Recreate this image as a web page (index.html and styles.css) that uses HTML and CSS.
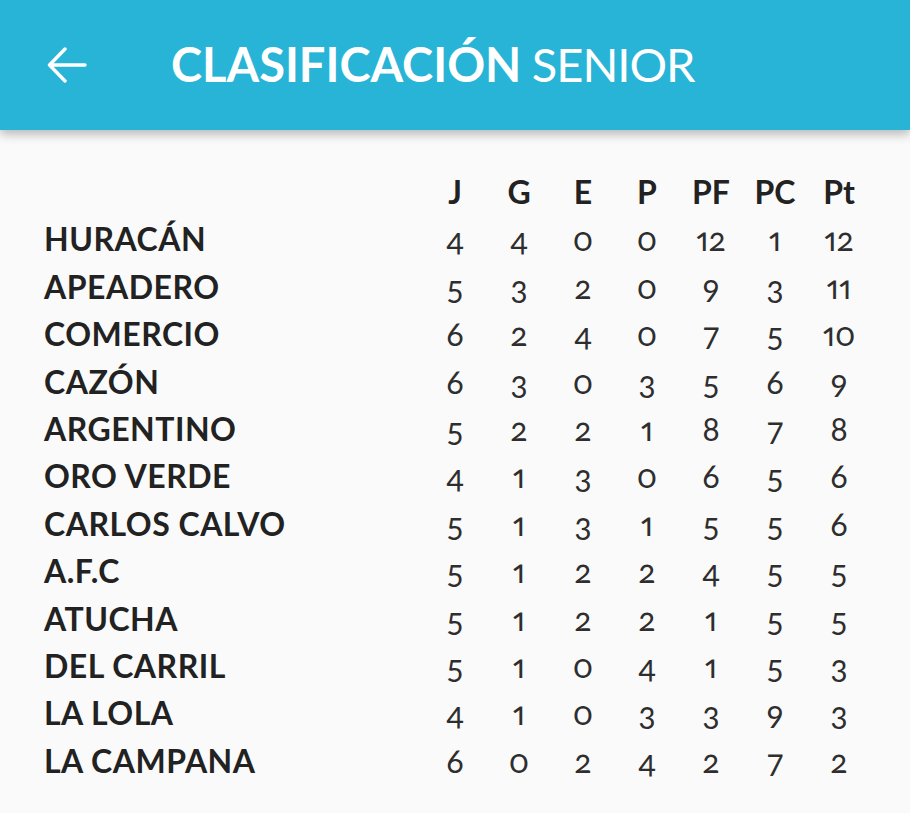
FILE: index.html
```html
<!DOCTYPE html>
<html lang="es">
<head>
<meta charset="utf-8">
<title>Clasificación Senior</title>
<link rel="stylesheet" href="styles.css">
</head>
<body>
<header class="appbar">
  <svg class="back" width="40" height="36" viewBox="0 0 40 36" aria-hidden="true">
    <path d="M38 18H3M18 2L2.5 18L18 34" fill="none" stroke="#fff" stroke-width="3.4" stroke-linecap="round" stroke-linejoin="round"/>
  </svg>
  <h1 class="title"><span class="strong">CLASIFICACIÓN</span> <span class="light">SENIOR</span></h1>
</header>
<main class="table">
  <div class="row head"><span class="name"></span><span>J</span><span>G</span><span>E</span><span>P</span><span>PF</span><span>PC</span><span>Pt</span></div>
  <div class="row"><span class="name">HURACÁN</span><span>4</span><span>4</span><span>0</span><span>0</span><span>12</span><span>1</span><span>12</span></div>
  <div class="row"><span class="name">APEADERO</span><span>5</span><span>3</span><span>2</span><span>0</span><span>9</span><span>3</span><span>11</span></div>
  <div class="row"><span class="name">COMERCIO</span><span>6</span><span>2</span><span>4</span><span>0</span><span>7</span><span>5</span><span>10</span></div>
  <div class="row"><span class="name">CAZÓN</span><span>6</span><span>3</span><span>0</span><span>3</span><span>5</span><span>6</span><span>9</span></div>
  <div class="row"><span class="name">ARGENTINO</span><span>5</span><span>2</span><span>2</span><span>1</span><span>8</span><span>7</span><span>8</span></div>
  <div class="row"><span class="name">ORO VERDE</span><span>4</span><span>1</span><span>3</span><span>0</span><span>6</span><span>5</span><span>6</span></div>
  <div class="row"><span class="name">CARLOS CALVO</span><span>5</span><span>1</span><span>3</span><span>1</span><span>5</span><span>5</span><span>6</span></div>
  <div class="row"><span class="name">A.F.C</span><span>5</span><span>1</span><span>2</span><span>2</span><span>4</span><span>5</span><span>5</span></div>
  <div class="row"><span class="name">ATUCHA</span><span>5</span><span>1</span><span>2</span><span>2</span><span>1</span><span>5</span><span>5</span></div>
  <div class="row"><span class="name">DEL CARRIL</span><span>5</span><span>1</span><span>0</span><span>4</span><span>1</span><span>5</span><span>3</span></div>
  <div class="row"><span class="name">LA LOLA</span><span>4</span><span>1</span><span>0</span><span>3</span><span>3</span><span>9</span><span>3</span></div>
  <div class="row"><span class="name">LA CAMPANA</span><span>6</span><span>0</span><span>2</span><span>4</span><span>2</span><span>7</span><span>2</span></div>
</main>
</body>
</html>
```
FILE: styles.css
```css
html, body {
  margin: 0;
  padding: 0;
  background: #fafafa;
}
body {
  font-family: Lato, "Noto Sans", sans-serif;
  color: #222222;
  width: 910px;
  height: 813px;
  overflow: hidden;
}
.appbar {
  height: 130px;
  background: #27b4d6;
  display: flex;
  align-items: center;
  padding-left: 47px;
  box-shadow: 0 4px 10px rgba(0, 0, 0, 0.28);
  position: relative;
  z-index: 1;
}
.back {
  flex: none;
}
.title {
  margin: -2px 0 0 84px;
  color: #ffffff;
  font-size: 47px;
  line-height: 1;
  white-space: nowrap;
  word-spacing: -1px;
}
.title .strong {
  font-weight: 700;
  letter-spacing: 0;
}
.title .light {
  font-weight: 400;
  letter-spacing: -1px;
}
.table {
  padding: 168px 0 0 44px;
  margin-top: -130px;
}
.row {
  display: grid;
  grid-template-columns: 379px repeat(7, 64px);
  height: 47.4px;
  align-items: center;
  font-size: 32px;
  line-height: 47.4px;
}
.row span {
  text-align: center;
  font-variant-numeric: oldstyle-nums proportional-nums;
  font-weight: 400;
  color: #2e2e2e;
}
.row .name {
  text-align: left;
  font-weight: 700;
  letter-spacing: 0.5px;
  color: #222222;
}
.row.head span {
  font-weight: 700;
  color: #222222;
}
```
